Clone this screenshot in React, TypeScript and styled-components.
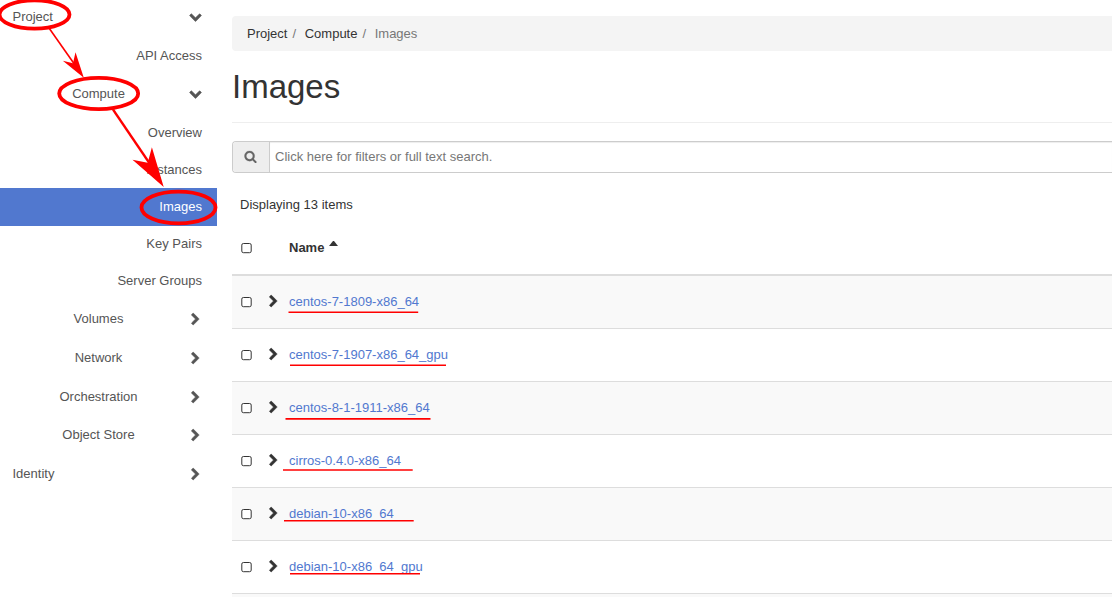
import React from "react";
import styled, { createGlobalStyle } from "styled-components";

const GlobalStyle = createGlobalStyle`
  * { box-sizing: border-box; }
  html, body { margin: 0; height: 100%; overflow: hidden; background: #fff; }
  body {
    font-family: "Liberation Sans", Arial, sans-serif;
    font-size: 13px;
    color: #333;
  }
`;

const Page = styled.div`
  position: relative;
  display: flex;
  width: 1112px;
  height: 597px;
  overflow: hidden;
`;

const Sidebar = styled.nav`
  flex: none;
  width: 217px;
  margin-top: -2px;
  color: #555;
`;

const NavRow = styled.div<{ $height: number; $active?: boolean }>`
  display: flex;
  justify-content: space-between;
  height: ${(p) => (p.$active ? p.$height + 1 : p.$height)}px;
  margin-bottom: ${(p) => (p.$active ? -1 : 0)}px;
  padding: 0 15px 0 12.5px;
  line-height: 37px;
  color: ${(p) => (p.$active ? "#fff" : "inherit")};
  background: ${(p) => (p.$active ? "#5178cf" : "transparent")};
`;

const NavLabel = styled.span<{ $align: "left" | "center" | "right" }>`
  flex: 1;
  text-align: ${(p) => p.$align};
`;

const NavIcon = styled.svg<{ $down?: boolean }>`
  flex: none;
  width: 13px;
  height: 13px;
  margin: ${(p) => (p.$down ? 12 : 13)}px 0.5px 0 4px;
  fill: #555;
  stroke: #555;
  stroke-width: 80px;
  overflow: visible;
`;

const Main = styled.main`
  flex: 1;
  min-width: 0;
  padding: 16px 0 0 15px;
`;

const Breadcrumb = styled.ol`
  display: flex;
  height: 35px;
  margin: 0;
  padding: 0 15px;
  list-style: none;
  line-height: 35px;
  background: #f4f4f4;
  border-radius: 4px 0 0 4px;
`;

const Crumb = styled.li<{ $current?: boolean }>`
  color: ${(p) => (p.$current ? "#777" : "#333")};
  &:not(:first-child)::before {
    content: "/\\00a0";
    padding: 0 5px;
    color: #777;
  }
`;

const Title = styled.h1`
  height: 72px;
  margin: 0;
  padding-top: 17px;
  border-bottom: 1px solid #eee;
  font-size: 33px;
  font-weight: 400;
  line-height: 37px;
`;

const SearchBar = styled.div`
  display: flex;
  height: 32px;
  margin-top: 18px;
  border: 1px solid #ccc;
  border-right: 0;
  border-radius: 4px 0 0 4px;
  overflow: hidden;
`;

const SearchAddon = styled.div`
  display: flex;
  align-items: center;
  justify-content: center;
  width: 37px;
  padding: 0 1px 2px 0;
  background: #eee;
  border-right: 1px solid #ccc;
  svg {
    width: 13px;
    height: 13px;
    fill: #666;
    stroke: #666;
    stroke-width: 30px;
  }
`;

const SearchInput = styled.div`
  flex: 1;
  padding-left: 5px;
  line-height: 30px;
  color: #777;
  box-shadow: inset 0 1px 1px rgba(0, 0, 0, 0.075);
`;

const Count = styled.div`
  height: 47px;
  padding: 13px 8px 0;
  line-height: 37px;
`;

const Row = styled.div<{ $striped?: boolean }>`
  display: grid;
  grid-template-columns: 36px 21px 1fr;
  height: 53px;
  border-bottom: 1px solid #ddd;
  background: ${(p) => (p.$striped ? "#f9f9f9" : "transparent")};
`;

const HeadRow = styled(Row)`
  height: 56px;
  border-bottom: 2px solid #ddd;
  font-weight: 700;
`;

const Check = styled.svg<{ $top: number }>`
  width: 11px;
  height: 10px;
  margin: ${(p) => p.$top}px 0 0 9px;
  overflow: visible;
`;

const Expander = styled.svg`
  width: 13px;
  height: 13px;
  margin-top: 19px;
  margin-left: -1px;
  fill: #333;
  stroke: #333;
  stroke-width: 80px;
  overflow: visible;
`;

const ImageLink = styled.a`
  line-height: 51px;
  color: #5178cf;
`;

const NameHead = styled.span`
  line-height: 56px;
`;

const Caret = styled.svg`
  width: 9px;
  height: 5px;
  margin-left: 4.5px;
  vertical-align: 6px;
  fill: #333;
`;

const Annotations = styled.svg`
  position: absolute;
  inset: 0;
  pointer-events: none;
`;

const RIGHT =
  "M1363 877l-742 742q-19 19-45 19t-45-19l-166-166q-19-19-19-45t19-45l531-531-531-531q-19-19-19-45t19-45l166-166q19-19 45-19t45 19l742 742q19 19 19 45t-19 45z";
const DOWN =
  "M1683 808l-742 741q-19 19-45 19t-45-19l-742-741q-19-19-19-45.500t19-45.500l166-165q19-19 45-19t45 19l531 531 531-531q19-19 45-19t45 19l166 165q19 19 19 45.500t-19 45.500z";
const SEARCH =
  "M1216 832q0-185-131.500-316.500t-316.500-131.500-316.500 131.500-131.500 316.500 131.500 316.500 316.500 131.500 316.500-131.500 131.500-316.500zm512 832q0 52-38 90t-90 38q-54 0-90-38l-343-342q-179 124-399 124-143 0-273.500-55.500t-225-150-150-225-55.500-273.500 55.500-273.500 150-225 225-150 273.500-55.500 273.500 55.500 225 150 150 225 55.500 273.500q0 220-124 399l343 343q37 37 37 90z";

type NavItem = {
  label: string;
  align: "left" | "center" | "right";
  height: number;
  icon?: "down" | "right";
  active?: boolean;
};

const navItems: NavItem[] = [
  { label: "Project", align: "left", height: 39, icon: "down" },
  { label: "API Access", align: "right", height: 38 },
  { label: "Compute", align: "center", height: 39, icon: "down" },
  { label: "Overview", align: "right", height: 37 },
  { label: "Instances", align: "right", height: 37 },
  { label: "Images", align: "right", height: 37, active: true },
  { label: "Key Pairs", align: "right", height: 37 },
  { label: "Server Groups", align: "right", height: 38 },
  { label: "Volumes", align: "center", height: 39, icon: "right" },
  { label: "Network", align: "center", height: 39, icon: "right" },
  { label: "Orchestration", align: "center", height: 38, icon: "right" },
  { label: "Object Store", align: "center", height: 39, icon: "right" },
  { label: "Identity", align: "left", height: 39, icon: "right" },
];

const images = [
  "centos-7-1809-x86_64",
  "centos-7-1907-x86_64_gpu",
  "centos-8-1-1911-x86_64",
  "cirros-0.4.0-x86_64",
  "debian-10-x86_64",
  "debian-10-x86_64_gpu",
];

function Checkbox({ top }: { top: number }) {
  return (
    <Check $top={top} viewBox="0 0 11 10">
      <rect x="0.800" y="0.500" width="9.400" height="9.200" rx="1.600" fill="#fff" stroke="#333" />
    </Check>
  );
}

export default function App() {
  return (
    <Page>
      <GlobalStyle />
      <Sidebar>
        {navItems.map((item) => (
          <NavRow key={item.label} $height={item.height} $active={item.active}>
            <NavLabel $align={item.align}>{item.label}</NavLabel>
            {item.icon && (
              <NavIcon viewBox="0 0 1792 1792" $down={item.icon === "down"}>
                <path d={item.icon === "down" ? DOWN : RIGHT} />
              </NavIcon>
            )}
          </NavRow>
        ))}
      </Sidebar>
      <Main>
        <Breadcrumb>
          <Crumb>Project</Crumb>
          <Crumb>Compute</Crumb>
          <Crumb $current>Images</Crumb>
        </Breadcrumb>
        <Title>Images</Title>
        <SearchBar>
          <SearchAddon>
            <svg viewBox="0 0 1792 1792"><path d={SEARCH} /></svg>
          </SearchAddon>
          <SearchInput>Click here for filters or full text search.</SearchInput>
        </SearchBar>
        <Count>Displaying 13 items</Count>
        <HeadRow>
          <Checkbox top={23} />
          <span />
          <NameHead>
            Name
            <Caret viewBox="0 0 9 5"><path d="M0 5L4 0H5L9 5Z" /></Caret>
          </NameHead>
        </HeadRow>
        {images.map((name, i) => (
          <Row key={name} $striped={i % 2 === 0}>
            <Checkbox top={21} />
            <Expander viewBox="0 0 1792 1792"><path d={RIGHT} /></Expander>
            <ImageLink>{name}</ImageLink>
          </Row>
        ))}
        <Row $striped />
      </Main>
      <Annotations width="1112" height="597" viewBox="0 0 1112 597">
        <g fill="none" stroke="#f00" strokeWidth="3.800">
          <ellipse cx="34.500" cy="14.500" rx="35" ry="14.200" />
          <ellipse cx="98.700" cy="93.500" rx="39.500" ry="15.700" />
          <ellipse cx="178.500" cy="207.500" rx="37" ry="15.800" />
        </g>
        <g stroke="#f00">
          <path d="M49 28L75 65" strokeWidth="1.600" />
          <path d="M113 109.500L150 164" strokeWidth="2.300" />
        </g>
        <g fill="#f00">
          <path d="M83.800 77.800L62.800 60.800L73 63.300L75.500 52.300Z" />
          <path d="M163.700 187L132.500 159.800L147.700 162.700L151.900 147.300Z" />
        </g>
        <g stroke="#f00" strokeWidth="1.600">
          <path d="M288.500 312.300H418.200" />
          <path d="M290 365.200H446" />
          <path d="M285.500 418.900H430.500" />
          <path d="M283 470H412.700" />
          <path d="M284 520.800H413.700" />
          <path d="M290 573.800H420" />
        </g>
      </Annotations>
    </Page>
  );
}
